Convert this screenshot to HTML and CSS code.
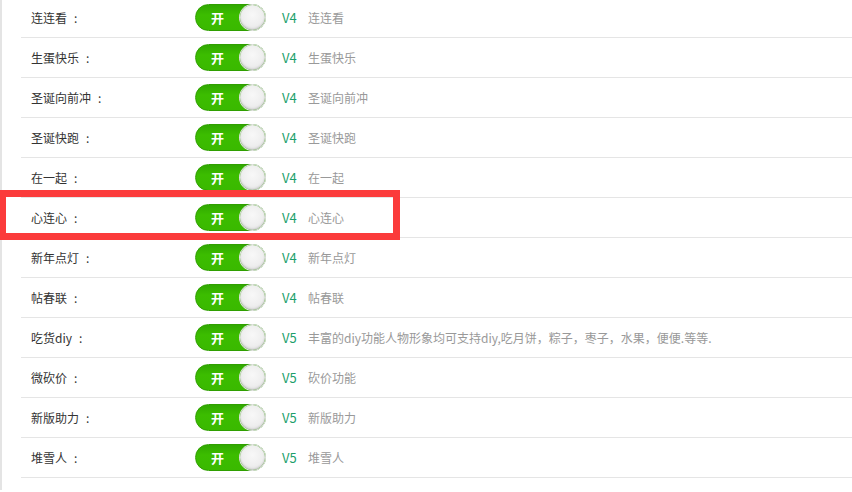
FILE: index.html
```html
<!DOCTYPE html>
<html lang="zh-CN">
<head>
  <meta charset="UTF-8" />
  <title>功能开关</title>
  <link rel="stylesheet" href="styles.css">
</head>
<body>
  <div class="page">
    <ul class="feature-list">
      <li class="feature-row">
        <span class="feature-name">连连看</span>
        <span class="switch"><span class="switch-text">开</span><span class="switch-knob"></span></span>
        <span class="feature-ver">V4</span>
        <span class="feature-desc">连连看</span>
      </li>
      <li class="feature-row">
        <span class="feature-name">生蛋快乐</span>
        <span class="switch"><span class="switch-text">开</span><span class="switch-knob"></span></span>
        <span class="feature-ver">V4</span>
        <span class="feature-desc">生蛋快乐</span>
      </li>
      <li class="feature-row">
        <span class="feature-name">圣诞向前冲</span>
        <span class="switch"><span class="switch-text">开</span><span class="switch-knob"></span></span>
        <span class="feature-ver">V4</span>
        <span class="feature-desc">圣诞向前冲</span>
      </li>
      <li class="feature-row">
        <span class="feature-name">圣诞快跑</span>
        <span class="switch"><span class="switch-text">开</span><span class="switch-knob"></span></span>
        <span class="feature-ver">V4</span>
        <span class="feature-desc">圣诞快跑</span>
      </li>
      <li class="feature-row">
        <span class="feature-name">在一起</span>
        <span class="switch"><span class="switch-text">开</span><span class="switch-knob"></span></span>
        <span class="feature-ver">V4</span>
        <span class="feature-desc">在一起</span>
      </li>
      <li class="feature-row">
        <span class="feature-name">心连心</span>
        <span class="switch"><span class="switch-text">开</span><span class="switch-knob"></span></span>
        <span class="feature-ver">V4</span>
        <span class="feature-desc">心连心</span>
      </li>
      <li class="feature-row">
        <span class="feature-name">新年点灯</span>
        <span class="switch"><span class="switch-text">开</span><span class="switch-knob"></span></span>
        <span class="feature-ver">V4</span>
        <span class="feature-desc">新年点灯</span>
      </li>
      <li class="feature-row">
        <span class="feature-name">帖春联</span>
        <span class="switch"><span class="switch-text">开</span><span class="switch-knob"></span></span>
        <span class="feature-ver">V4</span>
        <span class="feature-desc">帖春联</span>
      </li>
      <li class="feature-row">
        <span class="feature-name">吃货diy</span>
        <span class="switch"><span class="switch-text">开</span><span class="switch-knob"></span></span>
        <span class="feature-ver">V5</span>
        <span class="feature-desc">丰富的diy功能人物形象均可支持diy,吃月饼，粽子，枣子，水果，便便.等等.</span>
      </li>
      <li class="feature-row">
        <span class="feature-name">微砍价</span>
        <span class="switch"><span class="switch-text">开</span><span class="switch-knob"></span></span>
        <span class="feature-ver">V5</span>
        <span class="feature-desc">砍价功能</span>
      </li>
      <li class="feature-row">
        <span class="feature-name">新版助力</span>
        <span class="switch"><span class="switch-text">开</span><span class="switch-knob"></span></span>
        <span class="feature-ver">V5</span>
        <span class="feature-desc">新版助力</span>
      </li>
      <li class="feature-row">
        <span class="feature-name">堆雪人</span>
        <span class="switch"><span class="switch-text">开</span><span class="switch-knob"></span></span>
        <span class="feature-ver">V5</span>
        <span class="feature-desc">堆雪人</span>
      </li>
    </ul>
  </div>

  <!-- 标注框 -->
  <div class="mark-box"></div>
</body>
</html>
```

FILE: styles.css
```css
html, body {
  margin: 0;
  padding: 0;
  background-color: #fff;
  font-family: "Noto Sans CJK SC", "Noto Sans", sans-serif;
  font-size: 12px;
  color: #333;
  height: 100%;
  overflow: hidden;
}
.page {
  border-left: 2px solid #e4e4e4;
  min-height: 100%;
  padding-left: 19px;
  box-sizing: border-box;
}
.feature-list {
  list-style: none;
  margin: -2px 0 0 0;
  padding: 0;
}
.feature-row {
  display: flex;
  align-items: center;
  height: 39px;
  border-bottom: 1px solid #e5e5e5;
  padding-left: 10px;
}
.feature-name {
  width: 164px;
  flex-shrink: 0;
  color: #333;
}
.feature-name::after {
  content: ":";
  margin-left: 7px;
}
.switch {
  display: flex;
  align-items: center;
  justify-content: space-between;
  width: 71px;
  height: 27px;
  box-sizing: border-box;
  border: 1px solid #2f9f00;
  border-radius: 14px;
  background: linear-gradient(#30a800, #3cbd00 40%, #3ab900);
  flex-shrink: 0;
  padding-left: 15px;
}
.switch-text {
  color: #fff;
  font-weight: bold;
  font-size: 13px;
}
.switch-knob {
  width: 25px;
  height: 25px;
  border-radius: 50%;
  background: radial-gradient(circle at 50% 40%, #f8f8f8 0%, #eeeeee 55%, #d6d6d6 100%);
  box-shadow: inset 0 -1px 2px rgba(0, 0, 0, 0.15), 0 0 0 1px #e0e0e0;
}
.feature-ver {
  margin-left: 16px;
  width: 26px;
  color: #1d9f6c;
  font-size: 13px;
}
.feature-desc {
  color: #999;
}
.mark-box {
  position: absolute;
  left: -1px;
  top: 190px;
  width: 401px;
  height: 50px;
  box-sizing: border-box;
  border: 7px solid #fb3b3b;
}
```
